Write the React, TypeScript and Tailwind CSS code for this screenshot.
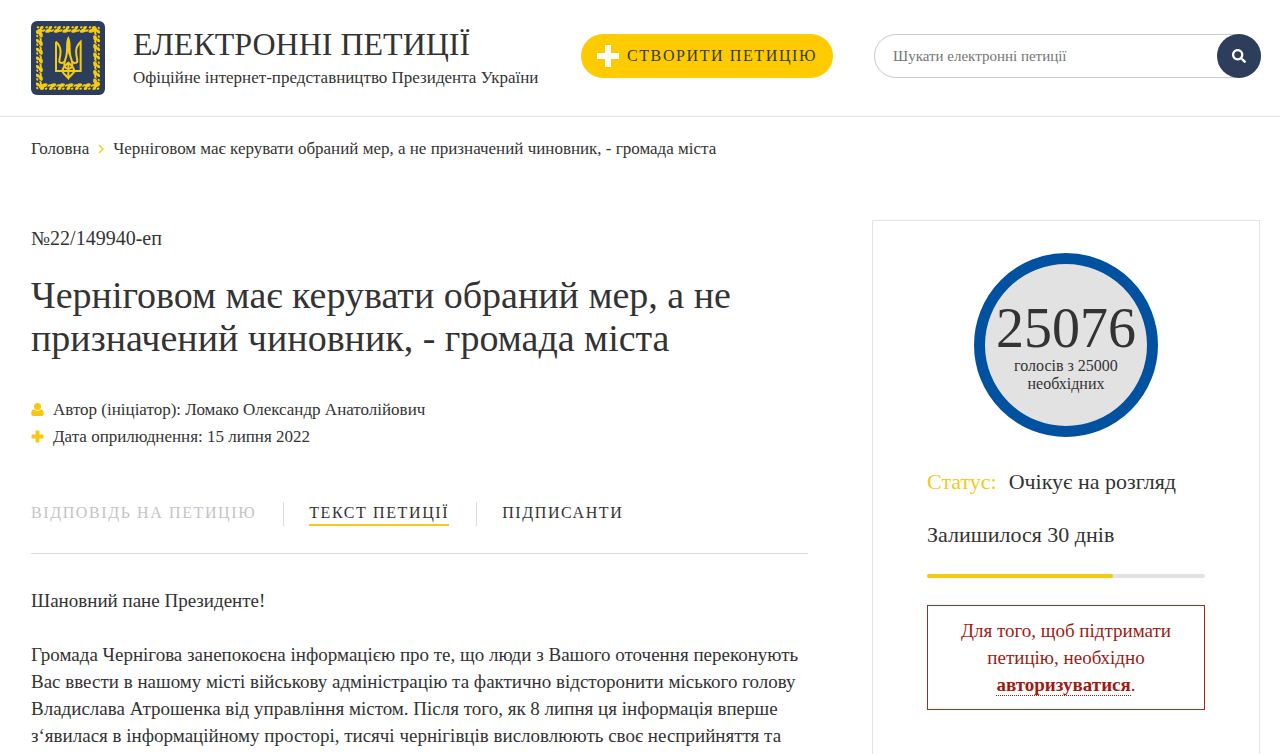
import React, { useState } from 'react'
import { FaSearch } from 'react-icons/fa'

type Tab = { id: string; label: string; disabled?: boolean }

const TABS: Tab[] = [
  { id: 'answer', label: 'Відповідь на петицію', disabled: true },
  { id: 'text', label: 'Текст петиції' },
  { id: 'signs', label: 'Підписанти' },
]

const TITLE = 'Черніговом має керувати обраний мер, а не призначений чиновник, - громада міста'

const LEAF = 'M-1 8 C0 1 5 -1 10 -2 C8 -7 12 -11 20 -10 C22 -5 19 -1 14 1 C18 2 22 1 26 -1 C26 6 21 9 15 7 C11 11 4 12 -1 8Z M0 -4 C-1 -9 5 -11 8 -8 C8 -4 4 -1 0 -4Z'
const STEPS = [0, 1, 2, 3, 4, 5, 6]
const SIDES = [0, 90, 180, 270]

function Emblem() {
  return (
    <svg viewBox="0 0 222 222" className="size-[74px] shrink-0" aria-hidden="true">
      <rect width="222" height="222" rx="18" fill="#2d3e5c" />
      {SIDES.map((angle) => (
        <g key={angle} transform={`rotate(${angle} 111 111)`} fill="#f5cb13">
          {STEPS.map((i) => (
            <path key={i} d={LEAF} transform={`translate(${17 + i * 26} 25)`} />
          ))}
        </g>
      ))}
      <g fill="none" stroke="#f5cb13" strokeWidth="6" strokeLinejoin="miter">
        <path d="M75 62 V150 H149 V62 C138 72 133 84 136 101 L139 119 C140 126 128 129 124 121" />
        <path d="M75 62 C86 72 91 84 88 101 L85 119 C84 126 96 129 100 121" />
        <path d="M112 52 C105 66 111 88 106 105 C103 116 99 124 100 132 C101 140 107 143 112 143 C117 143 123 140 124 132 C125 124 121 116 118 105 C113 88 119 66 112 52Z" />
        <path d="M94 150 C96 137 104 132 112 125 C120 132 128 137 130 150 M94 150 C96 160 105 161 112 172 C119 161 128 160 130 150 M112 125 V172" />
      </g>
      <path d="M112 48 C106 63 108 84 112 102 C116 84 118 63 112 48Z" fill="#f5cb13" />
    </svg>
  )
}

function UserIcon() {
  return (
    <svg viewBox="0 0 13 13" className="size-[13px] shrink-0" fill="#fbc70d" aria-hidden="true">
      <circle cx="6.5" cy="3.6" r="3.5" />
      <path d="M3 6.2C4.9 8.3 8.1 8.3 10 6.2c2.1.2 2.8 2.2 2.8 4.4 0 1.500-.8 2.300-2 2.300H2.200c-1.200 0-2-.8-2-2.300C.2 8.400.9 6.400 3 6.200z" />
    </svg>
  )
}

function PlusIcon() {
  return (
    <svg viewBox="0 0 13 13" className="size-[13px] shrink-0" fill="#fbc70d" aria-hidden="true">
      <path d="M5.200.5h2.600q.6 0 .6.6v3.500h3.500q.6 0 .6.6v2.600q0 .6-.6.6H8.400v3.500q0 .6-.6.6H5.200q-.6 0-.6-.6V8.400H1.100q-.6 0-.6-.6V5.200q0-.6.6-.6h3.500V1.100q0-.6.6-.6z" />
    </svg>
  )
}

function Header() {
  return (
    <header className="flex items-start border-b border-[#e3e3e3] pt-[21px] pr-[19px] pb-[21px] pl-[31px]">
      <a href="#" className="flex gap-7">
        <Emblem />
        <span className="flex flex-col pt-[3px]">
          <span className="text-[32px] leading-10 whitespace-nowrap uppercase">Електронні петиції</span>
          <span className="text-[17px] leading-[27px] whitespace-nowrap">Офіційне інтернет-представництво Президента України</span>
        </span>
      </a>
      <div className="mt-[13px] ml-auto flex gap-[41px]">
        <button className="flex h-11 w-[252px] items-center justify-center gap-2 rounded-full bg-[#fecb00] text-base tracking-widest whitespace-nowrap text-[#373a3c] uppercase">
          <svg viewBox="0 0 22 22" className="size-[22px] shrink-0" aria-hidden="true">
            <path d="M8 0h6v8h8v6h-8v8H8v-8H0V8h8z" fill="#fff" />
          </svg>
          Створити петицію
        </button>
        <form className="flex h-11 w-[387px] rounded-full border border-[#c9c9cf]" onSubmit={(e) => e.preventDefault()}>
          <input
            type="text"
            aria-label="Пошук"
            placeholder="Шукати електронні петиції"
            className="min-w-0 flex-1 rounded-full pl-[18px] text-[15px] placeholder:text-[#757575] focus:outline-none"
          />
          <button aria-label="Шукати" className="-m-px flex size-11 shrink-0 items-center justify-center rounded-full bg-[#2d3e5c] text-white">
            <FaSearch size={14} />
          </button>
        </form>
      </div>
    </header>
  )
}

function Tabs() {
  const [active, setActive] = useState('text')
  return (
    <div className="mt-[52px] flex border-b border-[#dcdcdc] pb-[27px]">
      {TABS.map((t) => (
        <div key={t.id} className="mr-[25px] flex h-6 items-start border-r border-[#dcdcdc] pr-[27px] last:mr-0 last:border-r-0 last:pr-0">
          <button
            disabled={t.disabled}
            onClick={() => setActive(t.id)}
            className={
              'h-6 border-b-2 text-base leading-[22px] tracking-widest whitespace-nowrap uppercase ' +
              (t.id === active ? 'border-[#f2c91c]' : 'border-transparent') +
              (t.disabled ? ' text-[#c4c4c4]' : '')
            }
          >
            {t.label}
          </button>
        </div>
      ))}
    </div>
  )
}

function VotesPanel() {
  const daysShare = 67
  return (
    <aside className="border border-b-0 border-[#e3e3e3] px-[54px] pt-8">
      <div className="mx-auto flex size-[184px] flex-col items-center rounded-full border-[11px] border-[#00519f] bg-[#e2e2e2] pt-9 text-center">
        <span className="text-[56px] leading-[56px]">25076</span>
        <span className="mt-px text-base leading-[18px]">
          голосів з 25000
          <br />
          необхідних
        </span>
      </div>
      <div className="mt-[31px] flex gap-3 text-[22px] leading-7 whitespace-nowrap">
        <span className="text-[#f5c816]">Статус:</span>
        <span>Очікує на розгляд</span>
      </div>
      <div className="mt-[25px] text-[22px] leading-7">Залишилося 30 днів</div>
      <div className="mt-[25px] h-1 rounded-full bg-[#e2e2e2]">
        <div className="h-1 rounded-full bg-[#f5c816]" style={{ width: `${daysShare}%` }} />
      </div>
      <p className="mt-[27px] border border-[#a12a24] px-5 py-[11px] text-center text-[19px] leading-[27px] text-[#9c1c14]">
        Для того, щоб підтримати петицію, необхідно{' '}
        <a href="#" className="border-b border-dotted border-[#9c1c14] font-bold">авторизуватися</a>.
      </p>
    </aside>
  )
}

export default function App() {
  return (
    <div className="flex min-h-screen flex-col bg-white font-['Liberation_Serif',serif] text-[#333]">
      <Header />

      <nav className="flex items-center gap-2 pt-[18px] pl-[31px] text-[17px] leading-[27px]">
        <a href="#">Головна</a>
        <svg viewBox="0 0 8 10" className="h-[10px] w-2" aria-hidden="true">
          <path d="M2 1l4 4-4 4" fill="none" stroke="#f5cb13" strokeWidth="1.3" />
        </svg>
        <span>{TITLE}</span>
      </nav>

      <main className="grid flex-1 grid-cols-[minmax(0,1fr)_388px] gap-16 pt-[58px] pr-5 pl-[31px]">
        <article className="pt-[5px]">
          <div className="text-xl leading-[27px]">№22/149940-еп</div>
          <h1 className="mt-[22px] text-[38px] leading-[43px]">{TITLE}</h1>

          <ul className="mt-9 text-[17px] leading-[27px]">
            <li className="flex items-center gap-[9px]">
              <UserIcon />
              Автор (ініціатор): Ломако Олександр Анатолійович
            </li>
            <li className="flex items-center gap-[9px]">
              <PlusIcon />
              Дата оприлюднення: 15 липня 2022
            </li>
          </ul>

          <Tabs />

          <div className="mt-[33px] flex flex-col gap-[27px] text-[19px] leading-[27px]">
            <p>Шановний пане Президенте!</p>
            <p>
              Громада Чернігова занепокоєна інформацією про те, що люди з Вашого оточення переконують
              <br />
              Вас ввести в нашому місті військову адміністрацію та фактично відсторонити міського голову
              <br />
              Владислава Атрошенка від управління містом. Після того, як 8 липня ця інформація вперше
              <br />
              з‘явилася в інформаційному просторі, тисячі чернігівців висловлюють своє несприйняття та
            </p>
          </div>
        </article>

        <VotesPanel />
      </main>
    </div>
  )
}
